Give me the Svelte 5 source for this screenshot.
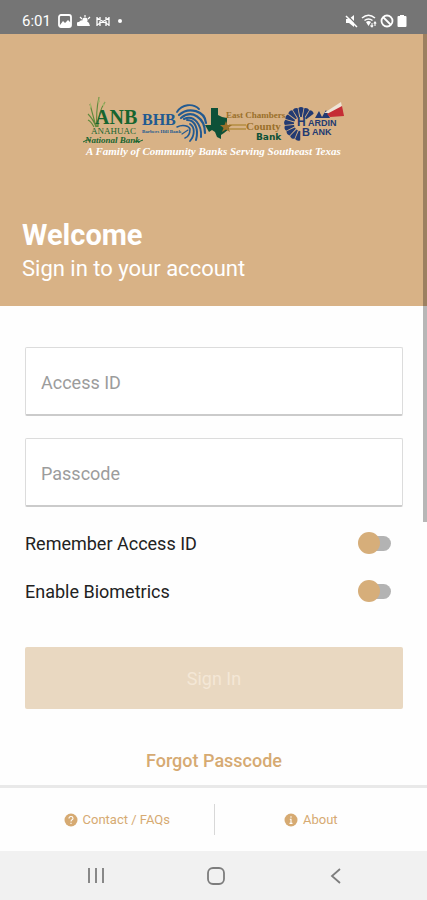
<script>
	let accessId = $state('');
	let passcode = $state('');
	let remember = $state(false);
	let biometrics = $state(false);

	let ready = $derived(accessId.length > 0 && passcode.length > 0);

	// windmill blades run up the left side and over the top
	const blades = [192, 213, 234, 255, 276, 297, 318, 339, 0, 21, 42];
</script>

<div class="screen">
	<div class="status">
		<div class="status-group">
			<span class="time">6:01</span>
			<svg width="14" height="14" viewBox="0 0 14 14">
				<rect x="1" y="1" width="12" height="12" rx="2" fill="none" stroke="#fff" stroke-width="1.8" />
				<path d="M2 11l3-4 2 2 3-3 3 3v3H2z" fill="#fff" />
			</svg>
			<svg width="14" height="14" viewBox="0 0 14 14">
				<circle cx="8" cy="6" r="2.6" fill="#fff" />
				<path d="M8 1v2M3 3l2 2M13 3l-2 2" stroke="#fff" stroke-width="1.2" />
				<path d="M1 12a2 2 0 0 1 1-4 3.5 3.5 0 0 1 6 0 3 3 0 0 1 4 1l1 3z" fill="#fff" />
			</svg>
			<svg width="14" height="14" viewBox="0 0 14 14">
				<path d="M1 3v9M4 3v9M10 3v9M13 3v9M1 4l12 7M1 11l12-7" fill="none" stroke="#fff" stroke-width="1.3" />
			</svg>
			<span class="dot"></span>
		</div>
		<div class="status-group right">
			<svg width="13" height="14" viewBox="0 0 13 14">
				<path d="M1 5h3l5-4v12L4 9H1z" fill="#fff" />
				<path d="M2 1l11 11" stroke="#757575" stroke-width="1.4" />
				<path d="M1 2l11 11" stroke="#fff" stroke-width="1.5" />
			</svg>
			<svg width="16" height="14" viewBox="0 0 16 14">
				<path d="M1 4c4-3.500 9-3.500 13 0M3.500 6.500c2.500-2 5.500-2 8 0" fill="none" stroke="#fff" stroke-width="1.5" />
				<path d="M5 8c1.500-1.200 3.500-1.200 5 0l-2.500 4z" fill="#fff" />
				<path d="M11 13V9M14 8v4M9.500 11.500L11 13l1.200-1.500M12.800 9.500L14 8l1.200 1.500" fill="none" stroke="#fff" stroke-width="1.1" />
			</svg>
			<svg width="14" height="14" viewBox="0 0 14 14">
				<circle cx="7" cy="7" r="5.5" fill="none" stroke="#fff" stroke-width="1.8" />
				<path d="M3 3l8 8" stroke="#fff" stroke-width="1.8" />
			</svg>
			<svg width="10" height="14" viewBox="0 0 10 14">
				<path d="M3 1h4v1h1.500q1 0 1 1v9q0 1-1 1h-7q-1 0-1-1V3q0-1 1-1H3z" fill="#fff" />
			</svg>
		</div>
	</div>

	<main>
		<header class="hero">
			<svg class="logo" width="265" height="70" viewBox="81 92 265 70">
				<!-- Anahuac National Bank -->
				<g fill="none" stroke="#5f8a3c" stroke-width="1.1">
					<path d="M96 127C94 119 92 112 90 104M97 127C96 116 97 106 99 97M98 127C98 118 101 108 105 102M96 127C94 121 91 117 88 114M94 127C92 123 90 121 88 120" />
				</g>
				<path d="M99 96l1 6-2 1zM90 102l2 5-2 1zM105 101l-1 5-2 0z" fill="#a9b56b" />
				<text class="serif bold green" x="95" y="124" font-size="20">ANB</text>
				<text class="serif green" x="91" y="134" font-size="9">ANAHUAC</text>
				<text class="serif bold italic green" x="85" y="143" font-size="9">National Bank</text>
				<path d="M83 142q4-3 8-2M134 141q5 2 9-1" fill="none" stroke="#17652f" stroke-width="1" />

				<!-- Barbers Hill Bank -->
				<text class="serif bold blue" x="142" y="125" font-size="16">BHB</text>
				<text class="serif bold blue" x="142" y="133" font-size="5">Barbers Hill Bank</text>
				<g fill="none" stroke="#225a91" stroke-linecap="round">
					<path d="M177 112C182 104 193 103 199 109" stroke-width="1.8" />
					<path d="M179 115C189 106 205 111 206 123" stroke-width="2.2" />
					<path d="M181 118C192 109 205 118 205 133" stroke-width="2.2" />
					<path d="M184 119C194 114 202 125 201 137" stroke-width="2" />
					<path d="M187 120C195 120 199 129 196 140" stroke-width="2" />
					<path d="M190 124C195 127 195 135 190 141" stroke-width="1.8" />
					<path d="M177 127C183 124 189 126 190 129C190 134 188 137 185 138" stroke-width="1.6" />
					<path d="M188 130L182 134" stroke-width="1.2" />
				</g>

				<!-- East Chambers County Bank -->
				<path d="M211 108h7v7l4 2 5 1v7l2 4-5 4-3 2v4l-4-2-2-5-3-2-3 2-4-7h6z" fill="#0d5138" />
				<path d="M229 124h17v2h-17zM229 128h17v2h-17z" fill="#bd9652" />
				<path d="M226 121l1.500 4h4.500l-3.500 3 1.500 4-4-2.500-4 2.500 1.500-4-3.500-3h4.500z" fill="#9a702b" />
				<text class="serif bold gold" x="226" y="118" font-size="9">East Chambers</text>
				<text class="serif bold gold" x="246" y="130" font-size="11">County</text>
				<text class="heavy" x="256" y="140" font-size="9">Bank</text>

				<!-- Hardin Bank -->
				<g fill="#233a72">
					{#each blades as angle}
						<path d="M-0.800 -7L-2.600 -16Q0 -18 2.600 -16L0.800 -7z" transform="translate(301 124) rotate({angle})" />
					{/each}
				</g>
				<path d="M315 118l4-7 3 6 4-7 4 8z" fill="#233a72" />
				<path d="M324 113l17-11 1 5-13 6z" fill="#eee3d5" />
				<path d="M327 114l15-8 2 10-14 1z" fill="#c52d35" />
				<text class="sans bold navy" x="297" y="126" font-size="12">H</text>
				<text class="sans bold navy" x="308" y="126" font-size="9">ARDIN</text>
				<text class="sans bold navy" x="302" y="136" font-size="11">B</text>
				<text class="sans bold navy" x="312" y="135" font-size="9">ANK</text>

				<text class="serif bold italic tagline" x="86" y="155" font-size="11">A Family of Community Banks Serving Southeast Texas</text>
			</svg>
			<h1>Welcome</h1>
			<p>Sign in to your account</p>
		</header>

		<form onsubmit={(e) => e.preventDefault()}>
			<input class="field" type="text" placeholder="Access ID" aria-label="Access ID" bind:value={accessId} />
			<input class="field" type="password" placeholder="Passcode" aria-label="Passcode" bind:value={passcode} />

			<label class="toggle">
				<span>Remember Access ID</span>
				<input type="checkbox" bind:checked={remember} />
			</label>
			<label class="toggle">
				<span>Enable Biometrics</span>
				<input type="checkbox" bind:checked={biometrics} />
			</label>

			<button class="sign-in" type="submit" disabled={!ready}>Sign In</button>
			<a class="forgot" href="#forgot">Forgot Passcode</a>
		</form>
		<div class="scrollbar"></div>
	</main>

	<footer>
		<a href="#contact">
			<svg width="14" height="14" viewBox="0 0 14 14">
				<circle cx="7" cy="7" r="6.5" fill="#d6aa72" />
				<path d="M5 5.500q0-2 2-2t2 1.700q0 1-1 1.600T7 8.500M7 9.700v1.300" fill="none" stroke="#fff" stroke-width="1.1" />
			</svg>
			Contact / FAQs
		</a>
		<a href="#about">
			<svg width="14" height="14" viewBox="0 0 14 14">
				<circle cx="7" cy="7" r="6.5" fill="#d6aa72" />
				<path d="M7 3.200v1.500M5.800 6.300H7v4M5.500 10.400h3" fill="none" stroke="#fff" stroke-width="1.1" />
			</svg>
			About
		</a>
	</footer>

	<nav>
		<button aria-label="Recent apps">
			<svg width="18" height="18" viewBox="0 0 18 18">
				<path d="M2 1v15M9 1v15M16 1v15" stroke="#7d7d7d" stroke-width="1.8" />
			</svg>
		</button>
		<button aria-label="Home">
			<svg width="18" height="18" viewBox="0 0 18 18">
				<rect x="1" y="1" width="16" height="16" rx="5" fill="none" stroke="#7d7d7d" stroke-width="1.8" />
			</svg>
		</button>
		<button aria-label="Back">
			<svg width="18" height="18" viewBox="0 0 18 18">
				<path d="M13 2L5 9l8 7" fill="none" stroke="#7d7d7d" stroke-width="1.8" />
			</svg>
		</button>
	</nav>
</div>

<style>
	:global(body) {
		margin: 0;
	}

	.screen {
		display: flex;
		flex-direction: column;
		min-height: 100vh;
		background: #fefefe;
		color: #222;
		font-family: Roboto, sans-serif;
	}

	svg {
		display: block;
		flex: none;
	}

	/* Status bar */
	.status {
		display: flex;
		justify-content: space-between;
		box-sizing: border-box;
		height: 34px;
		padding: 8px 20px 0 22px;
		background: #757575;
		color: #fff;
	}

	.status-group {
		display: flex;
		align-items: center;
		gap: 5px;
	}

	.right {
		gap: 3px;
	}

	.time {
		margin-right: 2px;
		font-size: 15px;
		line-height: 26px;
	}

	.dot {
		width: 4px;
		height: 4px;
		margin-left: 3px;
		border-radius: 50%;
		background: #fff;
	}

	main {
		position: relative;
		flex: 1;
	}

	.scrollbar {
		position: absolute;
		top: 0;
		right: 0;
		width: 4px;
		height: 65%;
		background: rgba(0, 0, 0, 0.28);
	}

	/* Hero */
	.hero {
		padding: 58px 22px 21px;
		background: #d8b286;
		color: #fff;
	}

	.logo {
		margin: 0 auto;
	}

	h1 {
		margin: 55px 0 0;
		font-size: 29px;
		line-height: 36px;
		font-weight: 700;
	}

	.hero p {
		margin: 0;
		font-size: 22px;
		line-height: 32px;
	}

	.serif {
		font-family: 'Liberation Serif', serif;
	}

	.sans {
		font-family: 'Liberation Sans', sans-serif;
	}

	.heavy {
		font-family: 'DejaVu Sans', sans-serif;
		font-weight: 700;
		fill: #0d5138;
	}

	.bold {
		font-weight: 700;
	}

	.italic {
		font-style: italic;
	}

	.green {
		fill: #17652f;
	}

	.blue {
		fill: #225a91;
	}

	.gold {
		fill: #9a702b;
	}

	.navy {
		fill: #233a72;
	}

	.tagline {
		fill: #fff;
	}

	/* Form */
	form {
		display: flex;
		flex-direction: column;
		padding: 41px 24px 10px 25px;
	}

	.field {
		box-sizing: border-box;
		width: 100%;
		height: 69px;
		margin: 0 0 22px;
		padding: 2px 15px 0;
		border: 1px solid #dcdcdc;
		border-bottom: 2px solid #cbcbcb;
		border-radius: 2px;
		background: #fff;
		color: #222;
		font-family: inherit;
		font-size: 18px;
		outline: none;
	}

	.field::placeholder {
		color: #9c9c9c;
		opacity: 1;
	}

	.toggle {
		display: flex;
		align-items: center;
		justify-content: space-between;
		height: 24px;
		margin: 2px 12px 22px 0;
		font-size: 18px;
	}

	.toggle input {
		appearance: none;
		display: flex;
		align-items: center;
		width: 33px;
		height: 22px;
		margin: 0;
	}

	/* knob */
	.toggle input::before {
		content: '';
		flex: none;
		z-index: 1;
		width: 22px;
		height: 22px;
		border-radius: 50%;
		background: #d6ae7a;
	}

	/* track */
	.toggle input::after {
		content: '';
		flex: none;
		width: 26px;
		height: 15px;
		margin-left: -15px;
		border-radius: 8px;
		background: #b3b3b3;
	}

	.toggle input:checked {
		flex-direction: row-reverse;
	}

	.toggle input:checked::after {
		margin: 0 -15px 0 0;
	}

	.sign-in {
		height: 62px;
		margin-top: 22px;
		border: 0;
		border-radius: 2px;
		background: #d6aa72;
		color: #fff;
		font-family: inherit;
		font-size: 18px;
	}

	.sign-in:disabled {
		background: #e9d8c1;
		color: #f4e7d6;
	}

	.forgot {
		align-self: center;
		margin-top: 40px;
		color: #d6aa72;
		font-size: 18px;
		line-height: 24px;
		font-weight: 500;
		text-decoration: none;
	}

	/* Footer links */
	footer {
		display: grid;
		grid-template-columns: 1fr 1fr;
		padding: 16px 0;
		border-top: 3px solid #e9e9e9;
	}

	footer a {
		display: flex;
		align-items: center;
		justify-content: center;
		gap: 5px;
		height: 31px;
		padding-left: 20px;
		color: #d6aa72;
		font-size: 13px;
		text-decoration: none;
	}

	footer a + a {
		padding: 0 20px 0 0;
		border-left: 1px solid #d8d8d8;
	}

	/* System navigation */
	nav {
		display: flex;
		align-items: center;
		justify-content: center;
		gap: 102px;
		height: 49px;
		padding-left: 4px;
		background: #f1f1f1;
	}

	nav button {
		padding: 0;
		border: 0;
		background: none;
	}
</style>
